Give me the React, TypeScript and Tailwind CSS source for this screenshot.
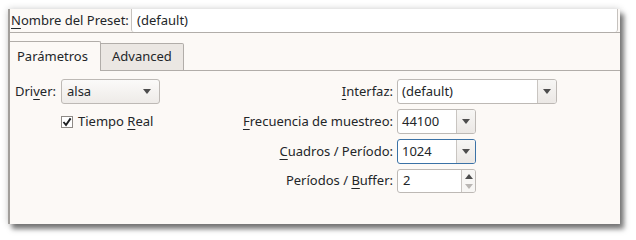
import React from "react";

const Arrow = ({ color = "#4d4d4d" }: { color?: string }) => (
  <svg width="8" height="5" viewBox="0 0 8 5">
    <path d="M0 0 H8 L4 5 Z" fill={color} />
  </svg>
);

const U = ({ children }: { children: React.ReactNode }) => (
  <span className="underline underline-offset-[3px] decoration-1">{children}</span>
);

function EditCombo({ value, width, focused }: { value: string; width: string; focused?: boolean }) {
  return (
    <div
      className={`flex h-[25px] ${width} rounded-[3px] border ${
        focused ? "border-[#3b72a6]" : "border-[#bdb9b5]"
      } bg-white overflow-hidden`}
    >
      <div className="flex-1 flex items-center pl-[4px]">{value}</div>
      <div className="w-[19px] border-l border-[#c9c5c1] bg-gradient-to-b from-[#f7f6f4] to-[#ebe8e5] flex items-center justify-center">
        <Arrow />
      </div>
    </div>
  );
}

export default function App() {
  return (
    <div className="w-[636px] h-[240px] bg-white overflow-hidden pt-[9px] pl-[8px]">
      <div className="w-[612px] h-[215px] bg-[#fcf9f6] border-l-2 border-[#a19e9b] shadow-[4px_5px_5px_rgba(0,0,0,0.5),0_0_7px_rgba(0,0,0,0.2)] flex flex-col text-[13px] text-[#232629] font-['Noto_Sans',sans-serif]">
        {/* Preset name row */}
        <div className="flex h-[24px] border-b border-[#b1ada9]">
          <div className="w-[121px] pl-[1px] flex items-center">
            <span>
              <U>N</U>ombre del Preset:
            </span>
          </div>
          <div className="flex-1 mr-[2px] bg-white border-x border-[#c6c2be] rounded-b-[3px] flex items-center pl-[5px]">
            (default)
          </div>
        </div>

        {/* Tabs */}
        <div className="flex items-end h-[30px] mt-[8px]">
          <div className="h-[30px] w-[91px] border-t border-r border-[#b1ada9] bg-[#fcf9f6] flex items-center pl-[7px] rounded-tr-[2px]">
            Parámetros
          </div>
          <div className="h-[28px] w-[83px] border-t border-r border-b border-[#b1ada9] bg-[#ebe7e3] flex items-center pl-[11px] rounded-tr-[2px]">
            Advanced
          </div>
          <div className="flex-1 h-full border-b border-[#b1ada9]" />
        </div>

        {/* Content */}
        <div className="pt-[8px] pl-[5px] grid grid-cols-[46px_99px_237px_auto] gap-y-[5px] items-center">
          {/* Row 1 */}
          <div>
            Dri<U>v</U>er:
          </div>
          <div className="flex items-center justify-between h-[25px] w-[99px] rounded-[3px] border border-[#bdb9b5] bg-gradient-to-b from-[#fbfaf9] to-[#eeebe8] pl-[5px] pr-[8px]">
            <span>alsa</span>
            <Arrow />
          </div>
          <div className="text-right pr-[4px]">
            <U>I</U>nterfaz:
          </div>
          <EditCombo value="(default)" width="w-[160px]" />

          {/* Row 2 */}
          <div />
          <div className="flex items-center h-[25px]">
            <div className="w-[12px] h-[12px] border border-[#8e8a86] bg-white flex items-center justify-center">
              <svg width="10" height="10" viewBox="0 0 10 10">
                <path d="M1.5 5 L4 8 L8.6 1.4" fill="none" stroke="#1d1f21" strokeWidth="1.9" />
              </svg>
            </div>
            <span className="ml-[5px]">
              Tiempo <U>R</U>eal
            </span>
          </div>
          <div className="text-right pr-[4px]">
            <U>F</U>recuencia de muestreo:
          </div>
          <EditCombo value="44100" width="w-[79px]" />

          {/* Row 3 */}
          <div />
          <div />
          <div className="text-right pr-[4px]">
            <U>C</U>uadros / Período:
          </div>
          <EditCombo value="1024" width="w-[79px]" focused />

          {/* Row 4 */}
          <div />
          <div />
          <div className="text-right pr-[4px]">
            Períodos / <U>B</U>uffer:
          </div>
          <div className="flex h-[24px] w-[79px] rounded-[3px] border border-[#bdb9b5] bg-white overflow-hidden">
            <div className="flex-1 flex items-center pl-[5px]">2</div>
            <div className="w-[14px] border-l border-[#c9c5c1] bg-[#f7f6f4] flex flex-col items-center justify-center gap-[5px]">
              <svg width="8" height="5" viewBox="0 0 8 5">
                <path d="M0 5 H8 L4 0 Z" fill="#4d4d4d" />
              </svg>
              <svg width="8" height="5" viewBox="0 0 8 5">
                <path d="M0 0 H8 L4 5 Z" fill="#b9b6b3" />
              </svg>
            </div>
          </div>
        </div>
      </div>
    </div>
  );
}
